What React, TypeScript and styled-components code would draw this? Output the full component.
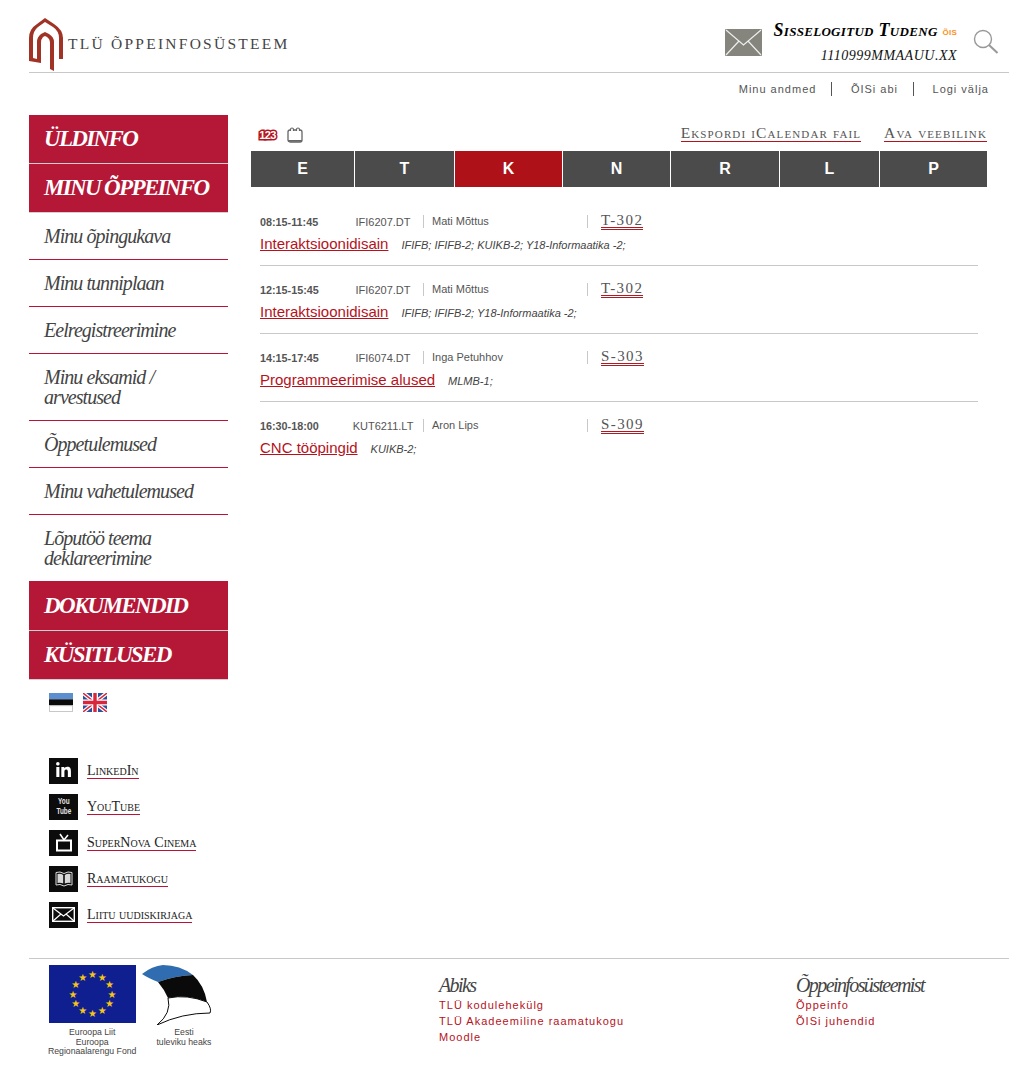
import * as React from 'react'
import styled, { createGlobalStyle } from 'styled-components'
import { FaLinkedinIn } from 'react-icons/fa'

const serif = '"Liberation Serif", "Times New Roman", serif'
const sans = '"Liberation Sans", Arial, sans-serif'
const red = '#b51837'
const linkRed = '#b5121b'

const GlobalStyle = createGlobalStyle`
  html, body {
    margin: 0;
    padding: 0;
    background: #fff;
    font-family: ${sans};
    color: #444;
  }
`

const Page = styled.div`
  width: 980px;
  padding: 0 15px 0 29px;
`

const Header = styled.header`
  height: 72px;
  border-bottom: 1px solid #c8c8c8;
  display: flex;
  justify-content: space-between;
`

const Brand = styled.div`
  display: flex;
  align-items: flex-start;
  padding-top: 18px;
`

const BrandTitle = styled.div`
  margin: 17px 0 0 5px;
  font-family: ${serif};
  font-size: 15.5px;
  line-height: 18px;
  letter-spacing: 2.25px;
  color: #444;
`

const UserArea = styled.div`
  display: flex;
  align-items: flex-start;
  padding-right: 10px;
`

const MailIcon = styled.svg`
  width: 38px;
  height: 28px;
  margin: 29px 10px 0 0;
`

const UserText = styled.div`
  display: flex;
  flex-direction: column;
  align-items: flex-end;
  padding-top: 20px;
`

const UserName = styled.div`
  font-family: ${serif};
  font-size: 18px;
  line-height: 20px;
  font-weight: 700;
  font-style: italic;
  font-variant: small-caps;
  color: #000;
  letter-spacing: 0.3px;
`

const OisTag = styled.sup`
  font-family: ${sans};
  font-size: 8px;
  font-style: normal;
  font-weight: 700;
  font-variant: normal;
  color: #f7931e;
  margin-left: 5px;
  line-height: 0;
  vertical-align: 1px;
  letter-spacing: 0.2px;
`

const UserCode = styled.div`
  margin-top: 8px;
  font-family: ${serif};
  font-size: 14px;
  line-height: 16px;
  font-style: italic;
  letter-spacing: 0.5px;
  color: #111;
`

const SearchIcon = styled.svg`
  width: 26px;
  height: 26px;
  margin: 29px 0 0 16px;
`

const TopNav = styled.nav`
  height: 33px;
  display: flex;
  justify-content: flex-end;
  align-items: flex-start;
  padding: 9px 20px 0 0;
`

const TopNavLink = styled.a<{ $sep?: boolean }>`
  font-size: 11px;
  line-height: 14px;
  letter-spacing: 1px;
  color: #555;
  padding-left: ${(p) => (p.$sep ? '18.5px' : '0')};
  margin-left: ${(p) => (p.$sep ? '15px' : '0')};
  border-left: ${(p) => (p.$sep ? '1px solid #555' : 'none')};
`

const Body = styled.div`
  display: flex;
  align-items: flex-start;
`

const Sidebar = styled.aside`
  width: 199px;
  flex: none;
`

const MainItem = styled.a`
  display: block;
  height: 48px;
  border-bottom: 1px solid #d4d0d2;
  background: ${red};
  color: #fff;
  font-family: ${serif};
  font-size: 23px;
  line-height: 48px;
  font-weight: 700;
  font-style: italic;
  text-transform: uppercase;
  letter-spacing: -1.65px;
  padding-left: 15px;
`

const TallMainItem = styled(MainItem)`
  height: 49px;
  line-height: 50px;
`

const SubItem = styled.a`
  display: block;
  padding: 13px 15px;
  border-bottom: 1px solid #bd1238;
  font-family: ${serif};
  font-size: 20px;
  line-height: 20px;
  font-style: italic;
  letter-spacing: -0.95px;
  color: #444;
`

const LastSubItem = styled(SubItem)`
  border-bottom: none;
`

const Flags = styled.div`
  display: flex;
  gap: 10px;
  padding: 13px 0 0 20px;
  height: 64px;
`

const Flag = styled.svg`
  width: 24px;
  height: 19px;
`

const SocialList = styled.ul`
  list-style: none;
  margin: 0;
  padding: 0 0 0 20px;
  display: flex;
  flex-direction: column;
  gap: 9px;
`

const SocialRow = styled.li`
  display: flex;
  align-items: center;
  gap: 9px;
  height: 27px;
`

const SocialIcon = styled.span`
  width: 29px;
  height: 26px;
  background: #0c0c0c;
  color: #fff;
  display: flex;
  align-items: center;
  justify-content: center;
  flex: none;
`

const YouTubeMark = styled.span`
  font-family: ${sans};
  font-size: 8.5px;
  line-height: 9.8px;
  font-weight: 700;
  text-align: center;
  color: #e6e6e6;
  transform: scaleX(0.75);
`

const SocialLink = styled.a`
  font-family: ${serif};
  font-size: 14px;
  line-height: 15px;
  font-variant: small-caps;
  color: #222;
  border-bottom: 1px solid #bd1238;
`

const Main = styled.main`
  flex: 1;
  margin-left: 23px;
  width: 736px;
  max-width: 736px;
`

const Toolbar = styled.div`
  height: 36px;
  display: flex;
  align-items: flex-start;
  justify-content: space-between;
`

const ViewIcons = styled.div`
  display: flex;
  align-items: center;
  gap: 9px;
  padding: 12px 0 0 6px;
`

const CountBadge = styled.svg`
  width: 21px;
  height: 14px;

  text {
    paint-order: stroke;
  }
`

const ToolLinks = styled.div`
  display: flex;
  gap: 23px;
  padding-top: 9px;
`

const ToolLink = styled.a`
  font-family: ${serif};
  font-size: 15.5px;
  line-height: 17px;
  font-variant: small-caps;
  letter-spacing: 1.13px;
  color: #555;
  border-bottom: 1px solid ${linkRed};
`

const DayTabs = styled.div`
  display: grid;
  grid-template-columns: 103px 99px 107px 107px 108px 99px 107px;
  column-gap: 1px;
  height: 36px;
`

const DayTab = styled.a<{ $active?: boolean }>`
  background: ${(p) => (p.$active ? '#ae1118' : '#4b4b4b')};
  color: #fff;
  font-size: 16px;
  font-weight: 700;
  line-height: 36px;
  text-align: center;
`

const Lessons = styled.div`
  margin: 11px 9px 0;
`

const Lesson = styled.div`
  height: 67px;
  border-bottom: 1px solid #c8c8c8;

  &:last-child {
    border-bottom: none;
  }
`

const LessonMeta = styled.div`
  display: flex;
  align-items: center;
  padding-top: 15px;
  height: 17px;
`

const LessonTime = styled.span`
  width: 83px;
  font-size: 10.8px;
  font-weight: 700;
  color: #555;
`

const LessonCode = styled.span`
  width: 80px;
  text-align: center;
  font-size: 11px;
  color: #555;
`

const LessonTeacher = styled.span`
  width: 155px;
  border-left: 1px solid #c8c8c8;
  padding-left: 8px;
  font-size: 11px;
  line-height: 13px;
  color: #555;
`

const LessonRoomCell = styled.span`
  border-left: 1px solid #c8c8c8;
  padding-left: 13px;
  height: 13px;
  display: flex;
  align-items: center;
`

const LessonRoom = styled.a`
  font-family: ${serif};
  font-size: 15px;
  line-height: 14px;
  letter-spacing: 1.4px;
  color: #555;
  margin-bottom: 2px;
  border-bottom: 1px solid #b01a22;
  box-shadow: 0 1px 0 #fff, 0 2px 0 #b01a22;
`

const LessonTitleRow = styled.div`
  display: flex;
  align-items: baseline;
  gap: 13px;
  margin-top: 5px;
`

const LessonTitle = styled.a`
  font-size: 15px;
  line-height: 18px;
  color: ${linkRed};
  text-decoration: underline;
`

const LessonGroups = styled.span`
  font-size: 11px;
  font-style: italic;
  color: #444;
`

const Footer = styled.footer`
  margin-top: 30px;
  border-top: 1px solid #c8c8c8;
  height: 126px;
  display: flex;
  align-items: flex-start;
`

const FooterLogos = styled.div`
  width: 410px;
  flex: none;
  display: flex;
  gap: 6px;
  padding: 6px 0 0 19px;
  box-sizing: border-box;
`

const LogoBlock = styled.div`
  display: flex;
  flex-direction: column;
  align-items: center;
`

const SailBlock = styled(LogoBlock)`
  align-items: flex-start;
`

const LogoCaption = styled.div`
  font-size: 8.7px;
  line-height: 9.7px;
  text-align: center;
  color: #444;
  white-space: nowrap;
  margin-top: 5px;
`

const SailCaption = styled(LogoCaption)`
  margin: 3px 0 0 14px;
`

const FooterColumn = styled.div<{ $width: number }>`
  width: ${(p) => p.$width}px;
  flex: none;
  padding-top: 15px;
`

const FooterHeading = styled.div`
  font-family: ${serif};
  font-size: 20px;
  line-height: 22px;
  font-style: italic;
  letter-spacing: -1.6px;
  color: #444;
  margin-bottom: 1px;
`

const FooterLink = styled.a`
  display: block;
  font-size: 11px;
  line-height: 16px;
  letter-spacing: 1.02px;
  color: ${linkRed};
`

const lessons = [
  { time: '08:15-11:45', code: 'IFI6207.DT', teacher: 'Mati Mõttus', room: 'T-302', title: 'Interaktsioonidisain', groups: 'IFIFB; IFIFB-2; KUIKB-2; Y18-Informaatika -2;' },
  { time: '12:15-15:45', code: 'IFI6207.DT', teacher: 'Mati Mõttus', room: 'T-302', title: 'Interaktsioonidisain', groups: 'IFIFB; IFIFB-2; Y18-Informaatika -2;' },
  { time: '14:15-17:45', code: 'IFI6074.DT', teacher: 'Inga Petuhhov', room: 'S-303', title: 'Programmeerimise alused', groups: 'MLMB-1;' },
  { time: '16:30-18:00', code: 'KUT6211.LT', teacher: 'Aron Lips', room: 'S-309', title: 'CNC tööpingid', groups: 'KUIKB-2;' },
]

const days = ['E', 'T', 'K', 'N', 'R', 'L', 'P']

const starPoints = Array.from({ length: 12 }, (_, i) => {
  const a = (i * Math.PI) / 6
  return { x: 43.5 + 19.5 * Math.sin(a), y: 29 - 19.5 * Math.cos(a) }
})

const Logo = () => (
  <svg width="34" height="54" viewBox="0 0 34 54">
    <path
      fill="#a03325"
      d="M0 43 L0 20 Q0 11 8 6 L16 0 L25 6 Q34 12 34 20 L34 41 L30 41 L30 20 Q30 13 24 9 L16 4 L9 9 Q4 13 4 20 L4 40 L8 41 L8 24 Q8 19 12 16 L16 14 L20 16 Q25 19 25 24 L25 53 L21 51 L21 25 Q21 21 18 19 L16 18 L14 19 Q12 21 12 25 L12 45 Z"
    />
  </svg>
)

const App = () => (
  <Page>
    <GlobalStyle />
    <Header>
      <Brand>
        <Logo />
        <BrandTitle>TLÜ ÕPPEINFOSÜSTEEM</BrandTitle>
      </Brand>
      <UserArea>
        <MailIcon viewBox="0 0 38 28">
          <rect x="0" y="0" width="37" height="27" rx="1" fill="#85857d" />
          <path d="M1 1 L18.5 16 L36 1 M1 26 L14 12 M36 26 L23 12" fill="none" stroke="#eee" strokeWidth="1.2" />
        </MailIcon>
        <UserText>
          <UserName>
            Sisselogitud Tudeng<OisTag>ÕIS</OisTag>
          </UserName>
          <UserCode>1110999MMAAUU.XX</UserCode>
        </UserText>
        <SearchIcon viewBox="0 0 26 26">
          <circle cx="10" cy="10" r="8.5" fill="none" stroke="#999" strokeWidth="1.4" />
          <path d="M16 16 L24.5 24" stroke="#999" strokeWidth="2" />
        </SearchIcon>
      </UserArea>
    </Header>
    <TopNav>
      <TopNavLink>Minu andmed</TopNavLink>
      <TopNavLink $sep>ÕISi abi</TopNavLink>
      <TopNavLink $sep>Logi välja</TopNavLink>
    </TopNav>
    <Body>
      <Sidebar>
        <MainItem>Üldinfo</MainItem>
        <MainItem>Minu õppeinfo</MainItem>
        <SubItem>Minu õpingukava</SubItem>
        <SubItem>Minu tunniplaan</SubItem>
        <SubItem>Eelregistreerimine</SubItem>
        <SubItem>Minu eksamid / arvestused</SubItem>
        <SubItem>Õppetulemused</SubItem>
        <SubItem>Minu vahetulemused</SubItem>
        <LastSubItem>Lõputöö teema deklareerimine</LastSubItem>
        <TallMainItem>Dokumendid</TallMainItem>
        <MainItem>Küsitlused</MainItem>
        <Flags>
          <Flag viewBox="0 0 24 19">
            <rect width="24" height="6.3" fill="#5b8fd0" />
            <rect y="6.3" width="24" height="6.4" fill="#0a0a0a" />
            <rect x="0.5" y="12.7" width="23" height="5.8" fill="#fff" stroke="#c8c8c8" />
          </Flag>
          <Flag viewBox="0 0 24 19">
            <rect width="24" height="19" fill="#2c4f9e" />
            <path d="M0 0 L24 19 M24 0 L0 19" stroke="#fff" strokeWidth="4" />
            <path d="M0 0 L24 19 M24 0 L0 19" stroke="#d8263c" strokeWidth="1.4" />
            <path d="M12 0 V19 M0 9.5 H24" stroke="#fff" strokeWidth="6" />
            <path d="M12 0 V19 M0 9.5 H24" stroke="#d8263c" strokeWidth="3.4" />
          </Flag>
        </Flags>
        <SocialList>
          <SocialRow>
            <SocialIcon>
              <FaLinkedinIn size={17} />
            </SocialIcon>
            <SocialLink>LinkedIn</SocialLink>
          </SocialRow>
          <SocialRow>
            <SocialIcon>
              <YouTubeMark>
                You
                <br />
                Tube
              </YouTubeMark>
            </SocialIcon>
            <SocialLink>YouTube</SocialLink>
          </SocialRow>
          <SocialRow>
            <SocialIcon>
              <svg width="18" height="20" viewBox="0 0 18 20">
                <rect x="2" y="7.5" width="14" height="10" fill="none" stroke="#fff" strokeWidth="2" />
                <path d="M5 1 L9 7 L13 2" fill="none" stroke="#fff" strokeWidth="1.6" />
              </svg>
            </SocialIcon>
            <SocialLink>SuperNova Cinema</SocialLink>
          </SocialRow>
          <SocialRow>
            <SocialIcon>
              <svg width="18" height="16" viewBox="0 0 18 16">
                <path d="M1 1.5 Q5 0 9 2.5 Q13 0 17 1.5 V14 Q13 12.5 9 15 Q5 12.5 1 14 Z" fill="#0c0c0c" stroke="#ddd" strokeWidth="1" />
                <path d="M2.5 3 Q5.5 2 8.2 4 V12.6 Q5.5 11.4 2.5 12 Z M15.5 3 Q12.5 2 9.8 4 V12.6 Q12.5 11.4 15.5 12 Z" fill="#d8d8d8" />
              </svg>
            </SocialIcon>
            <SocialLink>Raamatukogu</SocialLink>
          </SocialRow>
          <SocialRow>
            <SocialIcon>
              <svg width="23" height="15" viewBox="0 0 23 15">
                <rect x="0.7" y="0.7" width="21.6" height="13.6" fill="none" stroke="#fff" strokeWidth="1.4" />
                <path d="M1 1 L11.5 9 L22 1 M1 14 L9 7 M22 14 L14 7" fill="none" stroke="#fff" strokeWidth="1.2" />
              </svg>
            </SocialIcon>
            <SocialLink>Liitu uudiskirjaga</SocialLink>
          </SocialRow>
        </SocialList>
      </Sidebar>
      <Main>
        <Toolbar>
          <ViewIcons>
            <CountBadge viewBox="0 0 21 14">
              <text x="10.5" y="11" textAnchor="middle" fontFamily={sans} fontSize="11" fontWeight="700" letterSpacing="-0.6" fill="#fff" stroke="#b5121b" strokeWidth="3">123</text>
            </CountBadge>
            <svg width="16" height="16" viewBox="0 0 16 16">
              <rect x="1" y="3" width="14" height="12" rx="2" fill="none" stroke="#666" strokeWidth="1.3" />
              <path d="M1 13.8 H15" stroke="#666" strokeWidth="1.6" />
              <path d="M3.5 4 V2.5 Q3.5 1 5 1 Q6.5 1 6.5 2.5 V4 M9.5 4 V2.5 Q9.5 1 11 1 Q12.5 1 12.5 2.5 V4" fill="#fff" stroke="#666" strokeWidth="1.2" />
            </svg>
          </ViewIcons>
          <ToolLinks>
            <ToolLink>Ekspordi iCalendar fail</ToolLink>
            <ToolLink>Ava veebilink</ToolLink>
          </ToolLinks>
        </Toolbar>
        <DayTabs>
          {days.map((d) => (
            <DayTab key={d} $active={d === 'K'}>
              {d}
            </DayTab>
          ))}
        </DayTabs>
        <Lessons>
          {lessons.map((l) => (
            <Lesson key={l.time}>
              <LessonMeta>
                <LessonTime>{l.time}</LessonTime>
                <LessonCode>{l.code}</LessonCode>
                <LessonTeacher>{l.teacher}</LessonTeacher>
                <LessonRoomCell>
                  <LessonRoom>{l.room}</LessonRoom>
                </LessonRoomCell>
              </LessonMeta>
              <LessonTitleRow>
                <LessonTitle>{l.title}</LessonTitle>
                <LessonGroups>{l.groups}</LessonGroups>
              </LessonTitleRow>
            </Lesson>
          ))}
        </Lessons>
      </Main>
    </Body>
    <Footer>
      <FooterLogos>
        <LogoBlock>
          <svg width="87" height="58" viewBox="0 0 87 58">
            <rect width="87" height="58" fill="#0f1f8f" />
            {starPoints.map((s, i) => (
              <text key={i} x={s.x} y={s.y + 3.5} textAnchor="middle" fontSize="10" fill="#f5c518" fontFamily="DejaVu Sans">★</text>
            ))}
          </svg>
          <LogoCaption>
            Euroopa Liit
            <br />
            Euroopa
            <br />
            Regionaalarengu Fond
          </LogoCaption>
        </LogoBlock>
        <SailBlock>
          <svg width="70" height="60" viewBox="0 0 70 60">
            <path d="M0 9 Q10 1 21 0 Q38 0 51 10 Q32 11 16 17 Q6 13 0 9 Z" fill="#2f6db0" />
            <path d="M16 17 Q32 11 51 10 Q62 20 65 37 Q45 29 26 33 Q22 24 16 17 Z" fill="#0a0a0a" />
            <path d="M26 33 Q45 29 65 37 Q70 44 68 48 Q40 48 15 60 Q30 48 26 33 Z" fill="#fff" stroke="#0a0a0a" strokeWidth="1" />
          </svg>
          <SailCaption>
            Eesti
            <br />
            tuleviku heaks
          </SailCaption>
        </SailBlock>
      </FooterLogos>
      <FooterColumn $width={357}>
        <FooterHeading>Abiks</FooterHeading>
        <FooterLink>TLÜ kodulehekülg</FooterLink>
        <FooterLink>TLÜ Akadeemiline raamatukogu</FooterLink>
        <FooterLink>Moodle</FooterLink>
      </FooterColumn>
      <FooterColumn $width={200}>
        <FooterHeading>Õppeinfosüsteemist</FooterHeading>
        <FooterLink>Õppeinfo</FooterLink>
        <FooterLink>ÕISi juhendid</FooterLink>
      </FooterColumn>
    </Footer>
  </Page>
)

export default App
